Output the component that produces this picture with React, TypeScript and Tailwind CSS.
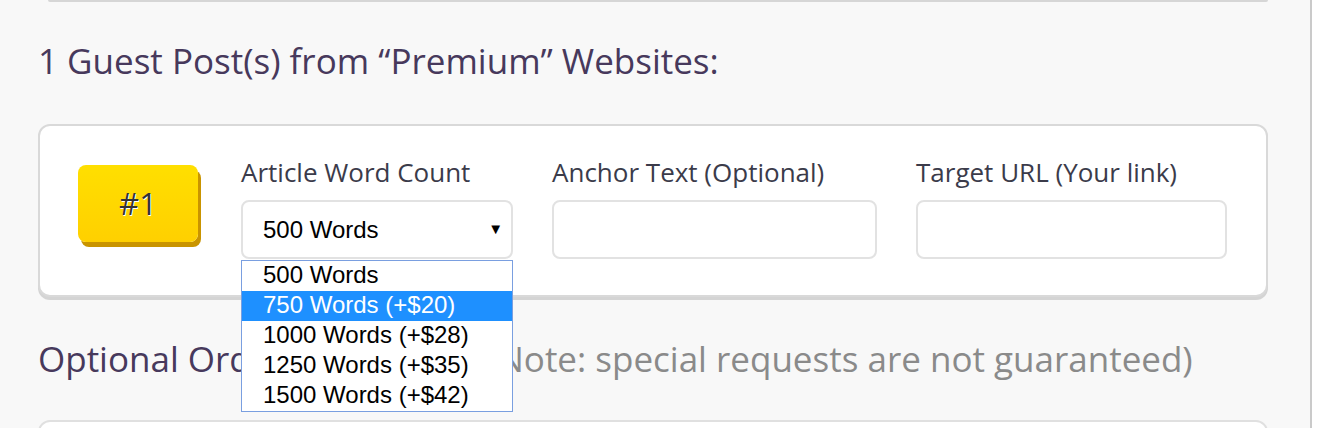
const heading = { fontFamily: '"Open Sans", "Noto Sans", sans-serif' };

const options = ['500 Words', '750 Words (+$20)', '1000 Words (+$28)', '1250 Words (+$35)', '1500 Words (+$42)'];

const App = () => {
    return (
        <div className="flex h-[428px] w-[1343px] overflow-hidden bg-white">
            <div className="w-[1312px] shrink-0 border-r-2 border-[#cacaca] bg-[#f8f8f8] pl-[38px]">
                <div className="ml-[10px] h-[2px] w-[1220px] rounded-b bg-[#d6d6d6]" />

                <h2 className="mt-[37px] text-[35px] leading-[44px] text-[#47395c]" style={heading}>
                    1 Guest Post(s) from “Premium” Websites:
                </h2>

                <div className="mt-[41px] flex h-[173px] w-[1230px] items-start rounded-xl border-2 border-[#d9d9d9] bg-white pt-[39px] pl-[38px] shadow-[0_3px_0_#d4d4d4]">
                    <button
                        className="flex h-[77px] w-[120px] shrink-0 items-center justify-center rounded-lg bg-gradient-to-b from-[#ffdf00] to-[#ffd000] text-[31px] text-[#333] shadow-[3px_5px_0_#c99400] [text-shadow:1px_1px_0_#fff]"
                        style={heading}
                    >
                        #1
                    </button>

                    <div className="relative -mt-[8px] ml-[43px] w-[272px]">
                        <label className="block text-[26px] leading-[30px] text-[#3b3b4a]" style={heading}>
                            Article Word Count
                        </label>
                        <div className="mt-[13px] flex h-[59px] items-center justify-between rounded-lg border-2 border-[#e2e2e2] bg-white pr-[8px] pl-[20px] font-['Liberation_Sans',Arial,sans-serif] text-[24px] text-black">
                            <span>500 Words</span>
                            <span className="text-[15px]">▼</span>
                        </div>
                        <ul className="absolute top-[103px] left-0 z-10 w-[272px] border border-[#7a9fe0] bg-white font-['Liberation_Sans',Arial,sans-serif] text-[24px] text-black">
                            {options.map((o, i) => (
                                <li
                                    key={o}
                                    className={`h-[30px] pl-[21px] leading-[28px] ${i === 1 ? 'bg-[#1e90ff] text-white' : ''}`}
                                >
                                    {o}
                                </li>
                            ))}
                        </ul>
                    </div>

                    <div className="-mt-[8px] ml-[39px] w-[325px]">
                        <label className="block text-[26px] leading-[30px] text-[#3b3b4a]" style={heading}>
                            Anchor Text (Optional)
                        </label>
                        <input className="mt-[13px] h-[59px] w-full rounded-lg border-2 border-[#e2e2e2] bg-white outline-none" />
                    </div>

                    <div className="-mt-[8px] ml-[39px] w-[311px]">
                        <label className="block text-[26px] leading-[30px] text-[#3b3b4a]" style={heading}>
                            Target URL (Your link)
                        </label>
                        <input className="mt-[13px] h-[59px] w-full rounded-lg border-2 border-[#e2e2e2] bg-white outline-none" />
                    </div>
                </div>

                <h2 className="mt-[40px] text-[35px] leading-[44px] text-[#47395c]" style={heading}>
                    Optional Order Notes{' '}
                    <span className="ml-[88px] text-[#8a8a8a]">(Note: special requests are not guaranteed)</span>
                </h2>

                <div className="mt-[39px] h-[60px] w-[1230px] rounded-xl border-2 border-[#e0e0e0] bg-white" />
            </div>
        </div>
    );
};

export default App;
